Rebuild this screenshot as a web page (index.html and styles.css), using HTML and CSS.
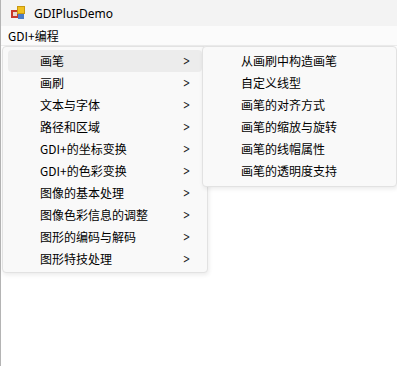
FILE: index.html
```html
<!DOCTYPE html>
<html lang="zh-CN">
<head>
    <meta charset="UTF-8">
    <title>GDIPlusDemo</title>
    <link rel="stylesheet" href="styles.css">
</head>
<body>
    <div class="window">
        <div class="titlebar">
            <svg class="app-icon" width="16" height="16" viewBox="0 0 16 16">
                <rect x="1" y="5" width="8" height="8" fill="#c8382c"/>
                <rect x="3" y="7" width="4" height="4" fill="#e8d8d0"/>
                <rect x="7" y="1" width="8" height="8" fill="#f0c020"/>
                <rect x="7.5" y="1.5" width="7" height="7" fill="none" stroke="#c89810"/>
                <rect x="8" y="9" width="6" height="5" fill="#4a7cc8"/>
            </svg>
            <span class="title">GDIPlusDemo</span>
        </div>
        <div class="menubar">
            <span class="menubar-item">GDI+编程</span>
        </div>
        <div class="content"></div>

        <ul class="menu main-menu">
            <li class="menu-item active">画笔<span class="arrow">&gt;</span></li>
            <li class="menu-item">画刷<span class="arrow">&gt;</span></li>
            <li class="menu-item">文本与字体<span class="arrow">&gt;</span></li>
            <li class="menu-item">路径和区域<span class="arrow">&gt;</span></li>
            <li class="menu-item">GDI+的坐标变换<span class="arrow">&gt;</span></li>
            <li class="menu-item">GDI+的色彩变换<span class="arrow">&gt;</span></li>
            <li class="menu-item">图像的基本处理<span class="arrow">&gt;</span></li>
            <li class="menu-item">图像色彩信息的调整<span class="arrow">&gt;</span></li>
            <li class="menu-item">图形的编码与解码<span class="arrow">&gt;</span></li>
            <li class="menu-item">图形特技处理<span class="arrow">&gt;</span></li>
        </ul>

        <ul class="menu sub-menu">
            <li class="menu-item">从画刷中构造画笔</li>
            <li class="menu-item">自定义线型</li>
            <li class="menu-item">画笔的对齐方式</li>
            <li class="menu-item">画笔的缩放与旋转</li>
            <li class="menu-item">画笔的线帽属性</li>
            <li class="menu-item">画笔的透明度支持</li>
        </ul>
    </div>
</body>
</html>
```

FILE: styles.css
```css
* {
    box-sizing: border-box;
}

html, body {
    margin: 0;
    padding: 0;
    height: 100%;
}

body {
    font-family: "Noto Sans CJK SC", "Microsoft YaHei", sans-serif;
    font-size: 12px;
    color: #000;
    background-color: #fff;
}

.window {
    position: relative;
    height: 100%;
    display: flex;
    flex-direction: column;
    border-left: 1px solid #b4b4b4;
}

.titlebar {
    height: 26px;
    display: flex;
    align-items: center;
    padding-left: 9px;
    background-color: #f3f3f3;
}

.app-icon {
    margin-right: 8px;
}

.title {
    font-family: "Segoe UI", "Noto Sans", sans-serif;
    font-size: 12px;
}

.menubar {
    height: 20px;
    display: flex;
    align-items: center;
    padding-left: 7px;
    background-color: #fbfbfb;
    border-bottom: 1px solid #ececec;
}

.menubar-item {
    font-size: 12px;
}

.content {
    flex: 1;
    background-color: #fff;
}

.menu {
    position: absolute;
    margin: 0;
    padding: 3px 0;
    list-style: none;
    background-color: #f9f9f9;
    border: 1px solid #e2e2e2;
    border-radius: 4px;
    box-shadow: 1px 2px 4px rgba(0, 0, 0, 0.08);
}

.menu-item {
    height: 22px;
    line-height: 22px;
    margin: 0 5px;
    display: flex;
    justify-content: space-between;
    align-items: center;
    border-radius: 4px;
}

.main-menu {
    top: 46px;
    left: 1px;
    width: 206px;
    padding-bottom: 2px;
}

.main-menu .menu-item {
    padding-left: 32px;
    padding-right: 10px;
}

.menu-item.active {
    background-color: #ececec;
}

.arrow {
    font-family: "DejaVu Sans", sans-serif;
    font-size: 13px;
    color: #222;
    transform: scaleX(0.65);
}

.sub-menu {
    top: 46px;
    left: 201px;
    width: 195px;
    padding-bottom: 4px;
}

.sub-menu .menu-item {
    padding-left: 33px;
}
```
